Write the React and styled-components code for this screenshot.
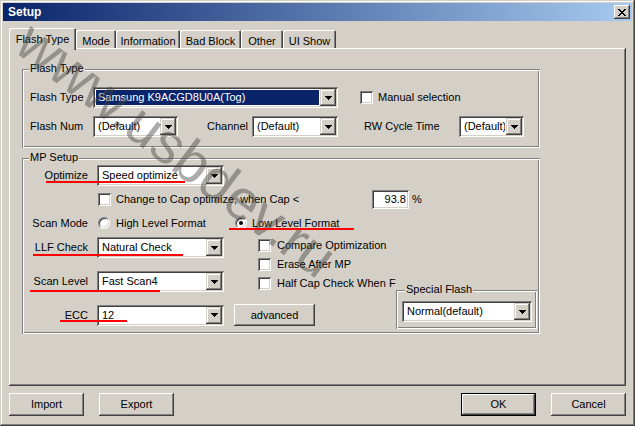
import React from 'react';
import styled, { createGlobalStyle, css } from 'styled-components';

const GlobalStyle = createGlobalStyle`
  html, body { margin: 0; padding: 0; background: #D4D0C8; }
  body { font-family: "Liberation Sans", Arial, sans-serif; font-size: 11px; color: #000; }
  * { box-sizing: border-box; }
`;

const raisedBtn = css`
  box-shadow: inset -1px -1px #404040, inset 1px 1px #fff, inset -2px -2px #808080, inset 2px 2px #D4D0C8;
`;
const raisedScroll = css`
  box-shadow: inset -1px -1px #404040, inset 1px 1px #D4D0C8, inset -2px -2px #808080, inset 2px 2px #fff;
`;
const sunken = css`
  box-shadow: inset 1px 1px #808080, inset -1px -1px #fff, inset 2px 2px #404040, inset -2px -2px #D4D0C8;
`;

const Window = styled.div`
  position: relative;
  width: 635px;
  height: 426px;
  padding: 3px;
  background: #D4D0C8;
  overflow: hidden;
  display: flex;
  flex-direction: column;
  box-shadow: inset -1px -1px #404040, inset 1px 1px #D4D0C8, inset -2px -2px #808080, inset 2px 2px #fff;
`;

const TitleBar = styled.div`
  height: 18px;
  display: flex;
  align-items: center;
  justify-content: space-between;
  padding: 0 2px 0 5px;
  background: linear-gradient(to right, #0A246A, #A6CAF0);
`;

const Title = styled.span`
  color: #fff;
  font-weight: bold;
  font-size: 12px;
  line-height: 14px;
`;

const CloseButton = styled.div`
  width: 16px;
  height: 14px;
  display: flex;
  align-items: center;
  justify-content: center;
  background: #D4D0C8;
  ${raisedBtn}
`;

const Content = styled.div`
  padding: 7px 6px 0 6px;
  display: flex;
  flex-direction: column;
`;

const TabStrip = styled.div`
  position: relative;
  z-index: 2;
  display: flex;
  align-items: flex-end;
  height: 20px;
`;

const Tab = styled.div`
  position: relative;
  width: ${p => p.$w}px;
  height: ${p => (p.$active ? 22 : 18)}px;
  margin-bottom: ${p => (p.$active ? -2 : 0)}px;
  padding-top: 5px;
  line-height: 13px;
  text-align: center;
  white-space: nowrap;
  background: #D4D0C8;
  border-radius: 2px 2px 0 0;
  box-shadow: inset 1px 1px #fff, inset -1px 0 #404040, inset -2px 0 #808080;
`;

const Panel = styled.div`
  height: 338px;
  padding: 21px 0 0 13px;
  display: flex;
  flex-direction: column;
  gap: 10px;
  box-shadow: inset -1px -1px #404040, inset 1px 1px #fff, inset -2px -2px #808080;
`;

const Group = styled.div`
  position: relative;
  width: ${p => p.$w}px;
  height: ${p => p.$h}px;
  flex: none;
  padding: ${p => p.$pad};
  box-shadow: inset 1px 1px #808080, inset -1px -1px #fff, inset 2px 2px #fff, inset -2px -2px #808080;
`;

const Legend = styled.span`
  position: absolute;
  top: -7px;
  left: ${p => p.$left}px;
  padding: 0 1px;
  line-height: 13px;
  background: #D4D0C8;
  white-space: nowrap;
`;

const Column = styled.div`
  display: flex;
  flex-direction: column;
  gap: ${p => p.$gap || 0}px;
`;

const Row = styled.div`
  display: flex;
  align-items: center;
  height: ${p => p.$h ?? 21}px;
  margin-top: ${p => p.$mt || 0}px;
  margin-left: ${p => p.$ml || 0}px;
`;

const FieldLabel = styled.span`
  flex: none;
  width: ${p => p.$w}px;
  margin-left: ${p => p.$ml || 0}px;
  text-align: ${p => (p.$right ? 'right' : 'left')};
  line-height: 13px;
  white-space: nowrap;
`;

const ComboBox = styled.div`
  flex: none;
  width: ${p => p.$w}px;
  height: 21px;
  margin-left: ${p => p.$ml || 0}px;
  padding: 2px;
  display: flex;
  background: #fff;
  ${sunken}
`;

const ComboValue = styled.div`
  flex: 1;
  min-width: 0;
  margin: 1px;
  padding-left: 2px;
  display: flex;
  align-items: center;
  white-space: nowrap;
  overflow: hidden;
  line-height: 13px;
  ${p => p.$selected && css`
    background: #0A246A;
    color: #fff;
  `}
`;

const DropButton = styled.div`
  flex: none;
  width: 16px;
  height: 17px;
  display: flex;
  align-items: center;
  justify-content: center;
  background: #D4D0C8;
  ${raisedScroll}
`;

const CheckItem = styled.label`
  display: flex;
  align-items: center;
  gap: ${p => p.$gap || 5}px;
  margin-left: ${p => p.$ml || 0}px;
  height: 13px;
  flex: none;
  white-space: nowrap;
`;

const CheckBox = styled.span`
  flex: none;
  width: 13px;
  height: 13px;
  background: #fff;
  ${sunken}
`;

const CheckText = styled.span`
  line-height: 13px;
  width: ${p => (p.$w ? `${p.$w}px` : 'auto')};
  white-space: nowrap;
`;

const Radio = styled.span`
  flex: none;
  width: 12px;
  height: 12px;
  border-radius: 50%;
  background: #fff;
  display: flex;
  align-items: center;
  justify-content: center;
  border: 1px solid;
  border-color: #808080 #fff #fff #808080;
  box-shadow: inset 1px 1px #404040, inset -1px -1px #D4D0C8;
  &::after {
    content: '';
    display: ${p => (p.$on ? 'block' : 'none')};
    width: 4px;
    height: 4px;
    border-radius: 50%;
    background: #000;
  }
`;

const EditBox = styled.div`
  flex: none;
  width: 37px;
  height: 19px;
  padding-right: 3px;
  display: flex;
  align-items: center;
  justify-content: flex-end;
  background: #fff;
  line-height: 13px;
  ${sunken}
`;

const Pct = styled.span`
  margin-left: 3px;
  line-height: 13px;
`;

const Button = styled.div`
  flex: none;
  width: ${p => p.$w || 75}px;
  height: ${p => p.$h || 23}px;
  margin-left: ${p => p.$ml || 0}px;
  display: flex;
  align-items: center;
  justify-content: center;
  line-height: 13px;
  background: #D4D0C8;
  ${p => (p.$default
    ? css`box-shadow: inset 0 0 0 1px #000, inset -2px -2px #404040, inset 2px 2px #fff, inset -3px -3px #808080;`
    : raisedBtn)}
`;

const ButtonBar = styled.div`
  margin-top: 7px;
  display: flex;
  justify-content: space-between;
`;

const ButtonGroup = styled.div`
  display: flex;
  gap: 15px;
`;

const LowerGrid = styled.div`
  margin-top: 7px;
  display: grid;
  grid-template-columns: 235px 138px 141px;
  grid-template-rows: 55px 37px;
  grid-template-areas:
    "combos checks checks"
    "ecc ecc special";
`;

const Area = styled.div`
  grid-area: ${p => p.$area};
  display: flex;
  flex-direction: column;
  gap: ${p => p.$gap || 0}px;
  margin-top: ${p => p.$mt || 0}px;
`;

const Overlay = styled.div`
  position: absolute;
  inset: 0;
  pointer-events: none;
  z-index: 5;
`;

const RedMark = styled.div`
  position: absolute;
  left: ${p => p.$x}px;
  top: ${p => p.$y}px;
  width: ${p => p.$w}px;
  height: 2px;
  background: #FF0000;
`;

const Watermark = styled.div`
  position: absolute;
  left: 24px;
  top: 6px;
  font-family: "Liberation Sans", Arial, sans-serif;
  font-size: 57px;
  line-height: 57px;
  color: rgba(70, 68, 64, 0.45);
  white-space: nowrap;
  transform-origin: 0 50%;
  transform: rotate(37deg);
`;

const Arrow = () => (
  <svg width="7" height="4" viewBox="0 0 7 4" shapeRendering="crispEdges">
    <path d="M0 0H7V1H6V2H5V3H4V4H3V3H2V2H1V1H0Z" fill="#000" />
  </svg>
);

const CloseGlyph = () => (
  <svg width="8" height="7" viewBox="0 0 8 7" shapeRendering="crispEdges">
    <path
      d="M0 0H2V1H3V2H5V1H6V0H8V1H7V2H6V3H5V4H6V5H7V6H8V7H6V6H5V5H3V6H2V7H0V6H1V5H2V4H3V3H2V2H1V1H0Z"
      fill="#000"
    />
  </svg>
);

function Combo({ w, ml, value, selected }) {
  return (
    <ComboBox $w={w} $ml={ml}>
      <ComboValue $selected={selected}>{value}</ComboValue>
      <DropButton><Arrow /></DropButton>
    </ComboBox>
  );
}

function Check({ label, ml }) {
  return (
    <CheckItem $ml={ml} $gap={6}>
      <CheckBox />
      <CheckText>{label}</CheckText>
    </CheckItem>
  );
}

const tabs = [
  { label: 'Flash Type', w: 67, active: true },
  { label: 'Mode', w: 40 },
  { label: 'Information', w: 64 },
  { label: 'Bad Block', w: 61 },
  { label: 'Other', w: 42 },
  { label: 'UI Show', w: 53 },
];

const marks = [
  { x: 46, y: 181, w: 139 },
  { x: 229, y: 228, w: 125 },
  { x: 33, y: 254, w: 150 },
  { x: 30, y: 290, w: 130 },
  { x: 60, y: 320, w: 67 },
];

export default function App() {
  return (
    <>
      <GlobalStyle />
      <Window>
        <TitleBar>
          <Title>Setup</Title>
          <CloseButton><CloseGlyph /></CloseButton>
        </TitleBar>
        <Content>
          <TabStrip>
            {tabs.map(t => (
              <Tab key={t.label} $w={t.w} $active={t.active}>{t.label}</Tab>
            ))}
          </TabStrip>
          <Panel>
            <Group $w={518} $h={79} $pad="18px 0 0 8px">
              <Legend $left={7}>Flash Type</Legend>
              <Column $gap={8}>
                <Row>
                  <FieldLabel $w={63}>Flash Type</FieldLabel>
                  <Combo w={245} value="Samsung K9ACGD8U0A(Tog)" selected />
                  <CheckItem $ml={22} $gap={5}>
                    <CheckBox />
                    <CheckText>Manual selection</CheckText>
                  </CheckItem>
                </Row>
                <Row>
                  <FieldLabel $w={63}>Flash Num</FieldLabel>
                  <Combo w={85} value="(Default)" />
                  <FieldLabel $w={45} $ml={29}>Channel</FieldLabel>
                  <Combo w={86} value="(Default)" />
                  <FieldLabel $w={95} $ml={26}>RW Cycle Time</FieldLabel>
                  <Combo w={65} value="(Default)" />
                </Row>
              </Column>
            </Group>

            <Group $w={518} $h={176} $pad="7px 0 0 1px">
              <Legend $left={7}>MP Setup</Legend>
              <Column>
                <Row>
                  <FieldLabel $w={65} $right>Optimize</FieldLabel>
                  <Combo w={127} ml={9} value="Speed optimize" />
                </Row>
                <Row $h={19} $mt={4}>
                  <CheckItem $ml={75} $gap={5}>
                    <CheckBox />
                    <CheckText $w={256}>Change to Cap optimize, when Cap &lt;</CheckText>
                  </CheckItem>
                  <EditBox>93.8</EditBox>
                  <Pct>%</Pct>
                </Row>
                <Row $h={14} $mt={7}>
                  <FieldLabel $w={65} $right>Scan Mode</FieldLabel>
                  <CheckItem $ml={10} $gap={6}>
                    <Radio />
                    <CheckText $w={119}>High Level Format</CheckText>
                  </CheckItem>
                  <CheckItem $gap={5}>
                    <Radio $on />
                    <CheckText>Low Level Format</CheckText>
                  </CheckItem>
                </Row>
                <LowerGrid>
                  <Area $area="combos" $gap={13}>
                    <Row>
                      <FieldLabel $w={65} $right>LLF Check</FieldLabel>
                      <Combo w={127} ml={9} value="Natural Check" />
                    </Row>
                    <Row>
                      <FieldLabel $w={65} $right>Scan Level</FieldLabel>
                      <Combo w={127} ml={9} value="Fast Scan4" />
                    </Row>
                  </Area>
                  <Area $area="checks" $gap={6} $mt={2}>
                    <Check label="Compare Optimization" />
                    <Check label="Erase After MP" />
                    <Check label="Half Cap Check When F" />
                  </Area>
                  <Area $area="ecc" $mt={12}>
                    <Row $h={22}>
                      <FieldLabel $w={65} $right>ECC</FieldLabel>
                      <Combo w={127} ml={9} value="12" />
                      <Button $w={81} $h={22} $ml={10}>advanced</Button>
                    </Row>
                  </Area>
                  <Area $area="special" $mt={-2}>
                    <Group $w={141} $h={39} $pad="11px 0 0 6px">
                      <Legend $left={9}>Special Flash</Legend>
                      <Combo w={130} value="Normal(default)" />
                    </Group>
                  </Area>
                </LowerGrid>
              </Column>
            </Group>
          </Panel>
          <ButtonBar>
            <ButtonGroup>
              <Button>Import</Button>
              <Button>Export</Button>
            </ButtonGroup>
            <ButtonGroup>
              <Button $default>OK</Button>
              <Button>Cancel</Button>
            </ButtonGroup>
          </ButtonBar>
        </Content>
        <Overlay>
          <Watermark>www.usbdev.ru</Watermark>
          {marks.map((m, i) => (
            <RedMark key={i} $x={m.x} $y={m.y} $w={m.w} />
          ))}
        </Overlay>
      </Window>
    </>
  );
}
